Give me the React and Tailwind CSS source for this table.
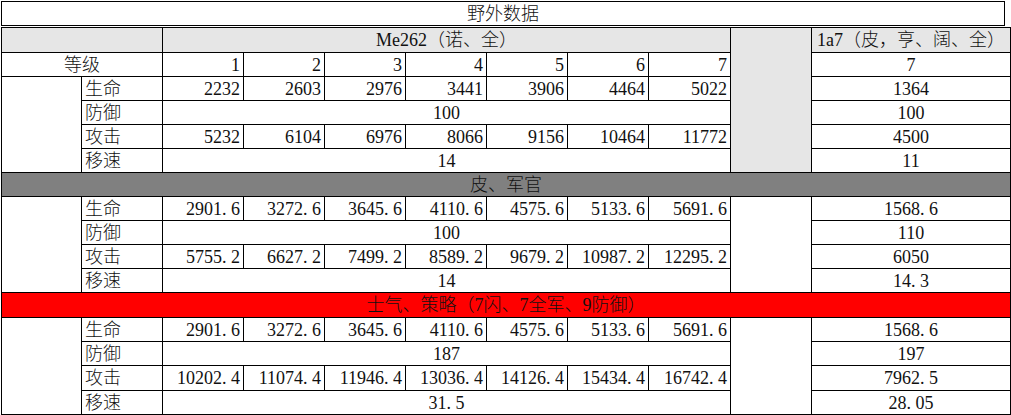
import React from "react";

const font = {
  fontFamily: '"Liberation Serif", "Noto Sans CJK SC", serif',
};

const sections = [
  {
    bar: null,
    rows: [
      ["生命", ["2232", "2603", "2976", "3441", "3906", "4464", "5022"], "1364"],
      ["防御", "100", "100"],
      ["攻击", ["5232", "6104", "6976", "8066", "9156", "10464", "11772"], "4500"],
      ["移速", "14", "11"],
    ],
  },
  {
    bar: { text: "皮、军官", cls: "bg-[#808080]" },
    rows: [
      ["生命", ["2901.6", "3272.6", "3645.6", "4110.6", "4575.6", "5133.6", "5691.6"], "1568.6"],
      ["防御", "100", "110"],
      ["攻击", ["5755.2", "6627.2", "7499.2", "8589.2", "9679.2", "10987.2", "12295.2"], "6050"],
      ["移速", "14", "14.3"],
    ],
  },
  {
    bar: { text: "士气、策略（7闪、7全军、9防御）", cls: "bg-[#ff0000]" },
    rows: [
      ["生命", ["2901.6", "3272.6", "3645.6", "4110.6", "4575.6", "5133.6", "5691.6"], "1568.6"],
      ["防御", "187", "197"],
      ["攻击", ["10202.4", "11074.4", "11946.4", "13036.4", "14126.4", "15434.4", "16742.4"], "7962.5"],
      ["移速", "31.5", "28.05"],
    ],
  },
];

// SimSun style half-width dot
function Num({ v }) {
  const parts = v.split(".");
  if (parts.length === 1) return v;
  return (
    <>
      {parts[0]}
      <span className="inline-block w-[9px] text-left">.</span>
      {parts[1]}
    </>
  );
}

const td = "border border-black p-0 whitespace-nowrap overflow-hidden";

export default function App() {
  return (
    <div className="w-[1011px] h-[415px] bg-white pt-[1px] pl-[1px] text-[#111] text-[18px] leading-[20px] font-light" style={font}>
      {/* Title */}
      <div className="w-[1004px] h-[25px] border border-black flex items-end justify-center pb-[1px]">
        野外数据
      </div>

      <table className="mt-[1px] w-[1009px] table-fixed border-collapse">
        <colgroup>
          <col className="w-[80px]" />
          <col className="w-[81px]" />
          <col className="w-[81px]" />
          <col className="w-[81px]" />
          <col className="w-[81px]" />
          <col className="w-[81px]" />
          <col className="w-[81px]" />
          <col className="w-[81px]" />
          <col className="w-[82px]" />
          <col className="w-[81px]" />
          <col className="w-[199px]" />
        </colgroup>
        <tbody>
          {/* Header */}
          <tr className="h-[25px]">
            <td colSpan={2} className={`${td} bg-[#e6e6e6]`} />
            <td colSpan={7} className={`${td} bg-[#e6e6e6] text-center`}>
              Me262（诺、全）
            </td>
            <td rowSpan={6} className={`${td} bg-[#e6e6e6]`} />
            <td className={`${td} bg-[#e6e6e6] text-center`}>1a7（皮，亨、阔、全）</td>
          </tr>
          <tr className="h-[24px]">
            <td colSpan={2} className={`${td} text-center`}>
              等级
            </td>
            {[1, 2, 3, 4, 5, 6, 7].map((n) => (
              <td key={n} className={`${td} text-right pr-[3px]`}>
                {n}
              </td>
            ))}
            <td className={`${td} text-center`}>7</td>
          </tr>

          {sections.map((s, si) => (
            <React.Fragment key={si}>
              {s.bar && (
                <tr className={si === 2 ? "h-[25px]" : "h-[24px]"}>
                  <td colSpan={11} className={`${td} ${s.bar.cls} text-center`}>
                    {s.bar.text}
                  </td>
                </tr>
              )}
              {s.rows.map(([label, vals, k], ri) => (
                <tr key={label} className={si === 2 && ri === 2 ? "h-[25px]" : "h-[24px]"}>
                  {ri === 0 && <td rowSpan={4} className={td} />}
                  <td className={`${td} text-left pl-[3px]`}>{label}</td>
                  {Array.isArray(vals) ? (
                    vals.map((v, i) => (
                      <td key={i} className={`${td} text-right pr-[3px]`}>
                        <Num v={v} />
                      </td>
                    ))
                  ) : (
                    <td colSpan={7} className={`${td} text-center`}>
                      <Num v={vals} />
                    </td>
                  )}
                  {ri === 0 && si > 0 && <td rowSpan={4} className={td} />}
                  <td className={`${td} text-center`}>
                    <Num v={k} />
                  </td>
                </tr>
              ))}
            </React.Fragment>
          ))}
        </tbody>
      </table>
    </div>
  );
}
